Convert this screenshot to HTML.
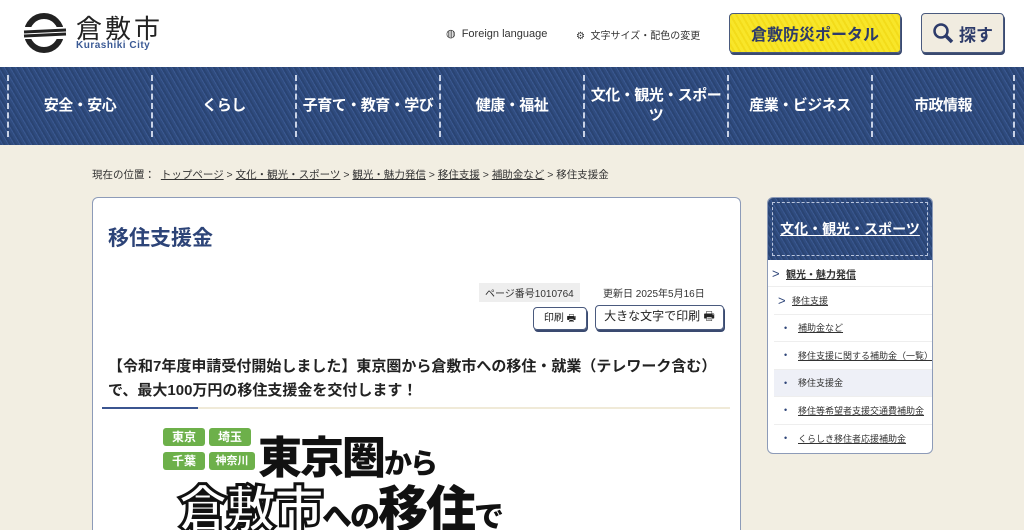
<!DOCTYPE html>
<html style="overflow:hidden;height:530px"><head><meta charset="utf-8"><style>
*{margin:0;padding:0;box-sizing:border-box}
body{width:1024px;height:530px;overflow:hidden;background:#f2eee2;font-family:"Liberation Sans","Noto Sans CJK JP",sans-serif;color:#222;position:relative}
#wrap{position:absolute;left:0;top:0;width:1024px;height:530px;overflow:hidden}
.hdr{position:absolute;left:0;top:0;width:1024px;height:67px;background:#fff}
.nav{position:absolute;left:0;top:67px;width:1024px;height:78px;background:repeating-linear-gradient(60deg,#2f4b7e 0 2px,#3a5890 2px 3px,#2a4473 3px 5px);display:flex;padding-left:7px}
.nav div{width:144px;height:62px;margin-top:8px;border-left:2px dashed #c8d2e6;color:#fff;font-weight:bold;font-size:15px;display:flex;align-items:center;justify-content:center;text-align:center;line-height:20px;letter-spacing:-.5px}
.nav div:last-child{border-right:2px dashed #c8d2e6}
.a{position:absolute;white-space:nowrap}
.main{position:absolute;left:92px;top:197px;width:649px;height:333px;background:#fff;border:1px solid #8d9bb8;border-bottom:0;border-radius:6px 6px 0 0}
.side{position:absolute;left:767px;top:197px;width:166px;height:257px;background:#fff;border:1px solid #8d9bb8;border-radius:6px;overflow:hidden}
.sh{height:62px;background:repeating-linear-gradient(60deg,#2f4b7e 0 2px,#3a5890 2px 3px,#2a4473 3px 5px);padding:4px}
.sh div{border:1px dashed #b9c5dd;height:54px;color:#fff;font-weight:bold;font-size:14px;text-decoration:underline;display:flex;align-items:center;justify-content:center}
.si{height:27.5px;border-bottom:1px solid #eee;font-size:9px;display:flex;align-items:center;padding-left:10px;margin:0 0 0 6px;color:#333;white-space:nowrap}
.si b{font-weight:normal;color:#2d4478;width:14px;flex:none}
.si span{text-decoration:underline}
.btn{position:absolute;border:1px solid #4a5a7e;border-radius:4px;box-shadow:1px 2px 0 #3a4a70;font-size:11px;display:flex;align-items:center;justify-content:center}
</style></head><body><div id="wrap">
<div class="hdr"></div>
<svg class="a" style="left:22px;top:13px" width="46" height="40" viewBox="0 0 46 40"><circle cx="22" cy="20" r="17" fill="none" stroke="#222" stroke-width="6"/><rect x="0" y="14" width="46" height="12" fill="#fff"/><path d="M2 19 L44 17 M2 23 L44 21" stroke="#222" stroke-width="3"/></svg>
<div class="a" style="left:76px;top:9px;font-size:26px;letter-spacing:3px;color:#222">倉敷市</div>
<div class="a" style="left:76px;top:40px;font-size:10px;font-weight:bold;color:#3b5a95;letter-spacing:.5px">Kurashiki City</div>
<div class="a" style="left:446px;top:27px;font-size:11px;color:#333">◍&nbsp; Foreign language</div>
<div class="a" style="left:576px;top:27px;font-size:10px;color:#333">⚙&nbsp; 文字サイズ・配色の変更</div>
<div class="btn" style="left:729px;top:13px;width:172px;height:40px;background:repeating-linear-gradient(60deg,#f8e62a 0 3px,#f3dc1a 3px 5px);font-size:16px;font-weight:bold;color:#2d3b6a">倉敷防災ポータル</div>
<div class="btn" style="left:921px;top:13px;width:83px;height:40px;background:#f1ece0;font-size:17px;font-weight:bold;color:#2d3b6a"><svg width="22" height="22" viewBox="0 0 22 22" style="margin-right:5px"><circle cx="9" cy="9" r="6.5" fill="none" stroke="#2d3b6a" stroke-width="2.5"/><path d="M14 14 L20 20" stroke="#2d3b6a" stroke-width="3.5"/></svg>探す</div>
<div class="nav"><div>安全・安心</div><div>くらし</div><div>子育て・教育・学び</div><div>健康・福祉</div><div>文化・観光・スポー<br>ツ</div><div>産業・ビジネス</div><div>市政情報</div></div>
<div class="a" style="left:92px;top:167px;font-size:10.5px;color:#333">現在の位置：&nbsp; <u>トップページ</u> &gt; <u>文化・観光・スポーツ</u> &gt; <u>観光・魅力発信</u> &gt; <u>移住支援</u> &gt; <u>補助金など</u> &gt; 移住支援金</div>
<div class="main"></div>
<div class="a" style="left:108px;top:222px;font-size:21px;font-weight:bold;color:#2d4478">移住支援金</div>
<div class="a" style="left:479px;top:283px;font-size:10px;background:#eee;padding:2px 6px;color:#333">ページ番号1010764</div>
<div class="a" style="left:603px;top:285px;font-size:10px;color:#333">更新日 2025年5月16日</div>
<div class="btn" style="left:533px;top:307px;width:54px;height:23px;font-size:10px">印刷 🖶</div>
<div class="btn" style="left:595px;top:305px;width:129px;height:25px;font-size:12px">大きな文字で印刷 🖶</div>
<div class="a" style="left:108px;top:355px;font-size:15px;font-weight:bold;line-height:24px;color:#222">【令和7年度申請受付開始しました】東京圏から倉敷市への移住・就業（テレワーク含む）<br>で、最大100万円の移住支援金を交付します！</div>
<div class="a" style="left:102px;top:407px;width:628px;height:2px;background:#f0ead8"></div>
<div class="a" style="left:102px;top:407px;width:96px;height:2px;background:#3b5590"></div>
<div class="a" style="left:163px;top:428px;width:42px;height:18px;background:#6db04a;border-radius:3px;color:#fff;font-size:12px;font-weight:bold;text-align:center">東京</div>
<div class="a" style="left:209px;top:428px;width:42px;height:18px;background:#6db04a;border-radius:3px;color:#fff;font-size:12px;font-weight:bold;text-align:center">埼玉</div>
<div class="a" style="left:163px;top:452px;width:42px;height:18px;background:#6db04a;border-radius:3px;color:#fff;font-size:12px;font-weight:bold;text-align:center">千葉</div>
<div class="a" style="left:209px;top:452px;width:46px;height:18px;background:#6db04a;border-radius:3px;color:#fff;font-size:11px;font-weight:bold;text-align:center">神奈川</div>
<div class="a" style="left:258px;top:422px;font-size:44px;font-weight:900;color:#111;letter-spacing:-2px">東京圏<span style="font-size:28px">から</span></div>
<div class="a" style="left:178px;top:480px;font-size:50px;font-weight:900;color:#fff;-webkit-text-stroke:3px #111;letter-spacing:-2px;line-height:60px">倉敷市<span style="font-size:30px;color:#111;-webkit-text-stroke:0">への</span><span style="color:#111;-webkit-text-stroke:0">移住</span><span style="font-size:30px;color:#111;-webkit-text-stroke:0">で</span></div>
<div class="side"><div class="sh"><div>文化・観光・スポーツ</div></div>
<div class="si" style="padding-left:4px;font-weight:bold;font-size:10px;margin-left:0;height:27px"><b style="font-size:13px">&gt;</b><span>観光・魅力発信</span></div>
<div class="si" style="padding-left:4px"><b style="font-size:13px">&gt;</b><span>移住支援</span></div>
<div class="si"><b>•</b><span>補助金など</span></div>
<div class="si"><b>•</b><span>移住支援に関する補助金（一覧）</span></div>
<div class="si" style="background:#eef0f7"><b>•</b>移住支援金</div>
<div class="si"><b>•</b><span>移住等希望者支援交通費補助金</span></div>
<div class="si" style="border:0"><b>•</b><span>くらしき移住者応援補助金</span></div>
</div>
</div></body></html>
